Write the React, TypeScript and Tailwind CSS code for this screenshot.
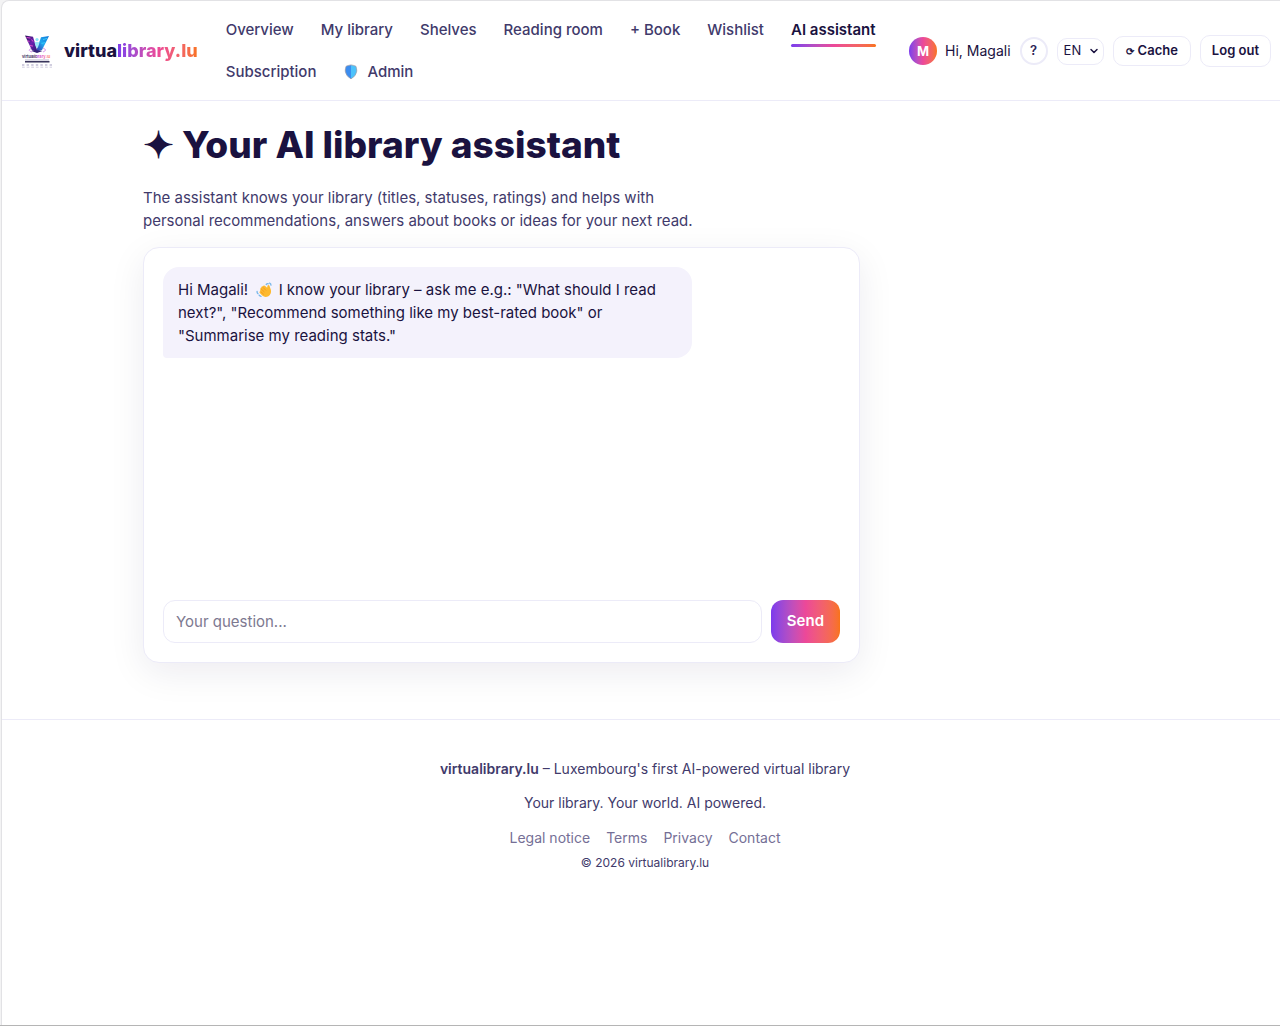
import { useState } from 'react'
import type { FormEvent } from 'react'
import { ChevronDown } from 'lucide-react'

const NAV_LINKS = ['Overview', 'My library', 'Shelves', 'Reading room', '+ Book', 'Wishlist', 'AI assistant', 'Subscription']
const FOOTER_LINKS = ['Legal notice', 'Terms', 'Privacy', 'Contact']

function Logo() {
  return (
    <svg viewBox="0 0 32 36" className="h-9 w-8 shrink-0" role="img" aria-label="virtualibrary.lu logo">
      <defs>
        <linearGradient id="logo-left" x1="0" y1="0" x2="1" y2="1">
          <stop offset="0" stopColor="#2b1058" />
          <stop offset="0.5" stopColor="#6a22b0" />
          <stop offset="1" stopColor="#2d1a70" />
        </linearGradient>
        <linearGradient id="logo-right" x1="1" y1="0" x2="0" y2="1">
          <stop offset="0" stopColor="#1277d8" />
          <stop offset="0.5" stopColor="#1ea7ef" />
          <stop offset="1" stopColor="#3a2ba8" />
        </linearGradient>
        <linearGradient id="logo-word" x1="0" y1="0" x2="1" y2="0">
          <stop offset="0.45" stopColor="#2a2150" />
          <stop offset="0.55" stopColor="#b83be0" />
          <stop offset="0.8" stopColor="#f0559a" />
          <stop offset="1" stopColor="#fb8a3c" />
        </linearGradient>
      </defs>
      <path d="M4 2.500l8 1.200 4.500 14.800-5.500-1z" fill="url(#logo-left)" />
      <path d="M28 3l-8 1.200-5 14.300 6-1.500z" fill="url(#logo-right)" />
      <path d="M5.500 4.500l4 .6M6.500 8l2 .3M9 12.500l3 .6M10.500 6.500l1.500 2" stroke="#e04bd0" strokeWidth="1" />
      <path d="M26 5.500l-4 1M24.500 9.500l-4 1" stroke="#38c9f8" strokeWidth="1" />
      <circle cx="16" cy="6.500" r="1.600" fill="#8be4f7" />
      <path d="M13.500 9.500q2.500-1.500 5 0l-1.600 5h-1.800z" fill="#9ce9f8" />
      <path d="M10 15.500q-4 2 1 3.500M22 15q5 2 0 4" stroke="#d58bea" fill="none" strokeWidth=".9" />
      <path d="M10.500 18q5.500-1.400 11 0l-5.500 2z" fill="#332176" />
      <text x="1" y="24.500" fontSize="4" fontWeight="600" fill="url(#logo-word)">
        virtualibrary.lu
      </text>
      <path d="M4 27h24" stroke="#8c88aa" strokeWidth=".6" />
      <path d="M4 28.800h24.500" stroke="#17123f" strokeWidth="1.300" />
      <path d="M1 32h30" stroke="#a9a3c4" strokeWidth="1.600" strokeDasharray="2.400 2.200" opacity=".7" />
      <path d="M1 34.200h30" stroke="#b7b2ce" strokeWidth=".9" strokeDasharray="2.800 1.800" opacity=".7" />
    </svg>
  )
}

function ShieldIcon() {
  return (
    <svg viewBox="0 0 16 18" className="h-4 w-4" aria-hidden="true">
      <path d="M8 1Q5 1.500 2.500 2.500Q1.500 5 1.500 8Q2 13.500 8 16.800Z" fill="#3b8df0" />
      <path d="M8 1Q11 1.500 13.500 2.500Q14.500 5 14.500 8Q14 13.500 8 16.800Z" fill="#4cc2fb" />
      <path d="M8 1Q5 1.500 2.500 2.500Q1.500 5 1.500 8Q2 13.500 8 16.800Q14 13.500 14.500 8Q14.500 5 13.500 2.500Q11 1.500 8 1z" fill="none" stroke="#9d9aa5" strokeWidth=".8" />
    </svg>
  )
}

function WaveIcon() {
  return (
    <svg viewBox="0 0 18 18" className="mr-0.5 ml-1 inline-block size-4 align-[-3px]" aria-hidden="true">
      <path d="M5 8Q4.500 6.500 6 6.200Q6 4.500 7.800 4.700Q8.500 3.200 10 4.200L12.500 6.500L13 4Q14 2.500 15 4L16.800 9Q17.600 13.500 14 16Q10 17.800 7 15.200L4 12.200Q3.300 10.700 5 10.400L4.600 9.500z" fill="#fdb92e" />
      <path d="M6 8l3.200 3M8 6.200l3 3M5.500 11l3 2.700" stroke="#ef8f1c" strokeWidth=".8" strokeLinecap="round" />
      <path d="M11.500 2.800q1-1.300 2.300-.8M15.300 1.200q1.600.6 1.500 2.300M1.200 10.500q-.2 1.800 1 2.600M3.500 14.800q.8 1.200 2.200 1.300" fill="none" stroke="#77b7ea" strokeWidth="1.500" strokeLinecap="round" />
    </svg>
  )
}

function Header() {
  return (
    <header className="flex items-center border-b border-[#ecebf8] pt-3 pr-[9px] pb-[11px] pl-[19px]">
      <a href="#" className="flex shrink-0 items-center gap-[11px]">
        <Logo />
        <span className="text-lg font-extrabold">
          virtua
          <span className="bg-linear-to-r from-[#7c3aed] via-[#ec4899] to-[#f97316] bg-clip-text text-transparent">library.lu</span>
        </span>
      </a>

      <nav className="ml-7 flex min-w-0 flex-1 flex-wrap gap-x-[27px] gap-y-2 font-medium text-[#413a6b]">
        {NAV_LINKS.map((label) =>
          label === 'AI assistant' ? (
            <a key={label} href="#" aria-current="page" className="relative py-1.5 text-[15px] leading-[22px] font-semibold text-[#1a1240]">
              {label}
              <span className="absolute inset-x-0 bottom-0 h-[3px] rounded-full bg-linear-to-r from-[#7c3aed] via-[#ec4899] to-[#f97316]" />
            </a>
          ) : (
            <a key={label} href="#" className="py-1.5 text-[15px] leading-[22px]">
              {label}
            </a>
          ),
        )}
        <a href="#" className="flex items-center gap-2 py-1.5 text-[15px] leading-[22px]">
          <ShieldIcon />
          Admin
        </a>
      </nav>

      <div className="flex shrink-0 items-center gap-[9px]">
        <div className="flex items-center gap-2 text-sm">
          <span className="flex size-7 items-center justify-center rounded-full bg-linear-to-r from-[#7c3aed] via-[#ec4899] to-[#f97316] text-[13px] font-bold text-white">
            M
          </span>
          Hi, Magali
        </div>
        <button type="button" aria-label="Help" className="size-7 rounded-full border-2 border-[#ecebf8] text-[13px] font-semibold text-[#2c2456]">
          ?
        </button>
        <div className="relative">
          <select aria-label="Language" defaultValue="EN" className="h-[27px] w-[47px] appearance-none rounded-[10px] border border-[#ecebf8] bg-white pl-1.5 text-[13px]">
            <option>EN</option>
            <option>DE</option>
            <option>FR</option>
          </select>
          <ChevronDown className="pointer-events-none absolute top-2 right-1 size-3" strokeWidth={3} />
        </div>
        <button type="button" className="flex h-[30px] items-center gap-1 rounded-[10px] border border-[#ecebf8] px-3 text-[13px] font-semibold">
          <span className="text-[10px]">⟳</span>
          Cache
        </button>
        <button type="button" className="h-8 rounded-[10px] border border-[#ecebf8] px-[11px] text-[13px] font-semibold">
          Log out
        </button>
      </div>
    </header>
  )
}

export default function App() {
  const [question, setQuestion] = useState('')

  const handleSubmit = (e: FormEvent) => {
    e.preventDefault()
    setQuestion('')
  }

  return (
    <div className="flex min-h-screen flex-col border-b border-[#b5b5b5] bg-[#f3f3f4] font-['Inter',sans-serif] text-[#1a1240]">
      <div className="ml-px flex-1 rounded-tl-lg border-t border-l border-[#e2e2e5] bg-white">
        <Header />

        {/* Assistant */}
        <main className="border-b border-[#ecebf8] pt-[19px] pb-14 pl-2">
          <div className="mx-auto max-w-[1004px]">
            <h1 className="text-[37px] leading-[50px] font-extrabold">✦ Your AI library assistant</h1>
            <p className="mt-4 max-w-[570px] text-[15px] leading-[23px] text-[#413a6b]">
              The assistant knows your library (titles, statuses, ratings) and helps with personal recommendations, answers about books or ideas for your next read.
            </p>

            <section className="mt-[15px] flex min-h-[416px] max-w-[717px] flex-col rounded-2xl border border-[#ecebf8] bg-white p-[19px] shadow-[0_10px_36px_rgba(26,18,64,0.08)]">
              <div className="flex-1">
                <p className="max-w-[529px] rounded-2xl rounded-bl-sm bg-[#f4f2fc] px-[15px] py-[11px] text-[15px] leading-[23px]">
                  Hi Magali! <WaveIcon /> I know your library – ask me e.g.: "What should I read next?", "Recommend something like my best-rated book" or "Summarise my reading stats."
                </p>
              </div>
              <form onSubmit={handleSubmit} className="flex gap-[9px]">
                <input
                  aria-label="Your question"
                  value={question}
                  onChange={(e) => setQuestion(e.target.value)}
                  placeholder="Your question..."
                  className="h-[43px] min-w-0 flex-1 rounded-xl border border-[#ecebf8] px-3 text-[15px] placeholder:text-[#7d7990]"
                />
                <button type="submit" className="rounded-xl bg-linear-to-r from-[#7c3aed] via-[#ec4899] to-[#f97316] px-4 text-[15px] font-semibold text-white">
                  Send
                </button>
              </form>
            </section>
          </div>
        </main>

        {/* Footer */}
        <footer className="pt-[38px] pb-8 pl-2 text-center text-sm leading-[22px] text-[#413a6b]">
          <p>
            <strong className="font-semibold">virtualibrary.lu</strong> – Luxembourg's first AI-powered virtual library
          </p>
          <p className="mt-3">Your library. Your world. AI powered.</p>
          <div className="mt-[13px] flex justify-center gap-4 text-[#756f96]">
            {FOOTER_LINKS.map((label) => (
              <a key={label} href="#">
                {label}
              </a>
            ))}
          </div>
          <p className="mt-1.5 text-xs">© 2026 virtualibrary.lu</p>
        </footer>
      </div>
    </div>
  )
}
